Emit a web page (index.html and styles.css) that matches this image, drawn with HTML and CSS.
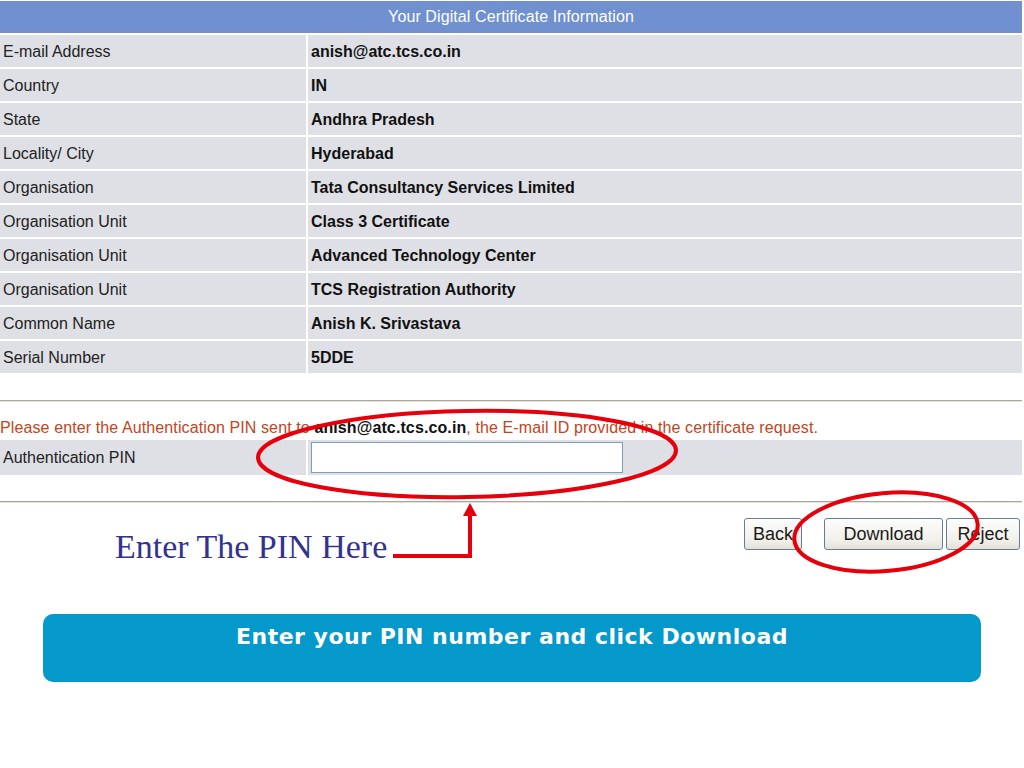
FILE: index.html
```html
<!DOCTYPE html>
<html lang="en">
<head>
<meta charset="utf-8">
<title>Your Digital Certificate Information</title>
<link rel="stylesheet" href="styles.css">
</head>
<body>
<div class="page">
  <div class="cert">
    <div class="cert-head">Your Digital Certificate Information</div>
    <div class="lbl">E-mail Address</div><div class="val">anish@atc.tcs.co.in</div>
    <div class="lbl">Country</div><div class="val">IN</div>
    <div class="lbl">State</div><div class="val">Andhra Pradesh</div>
    <div class="lbl">Locality/ City</div><div class="val">Hyderabad</div>
    <div class="lbl">Organisation</div><div class="val">Tata Consultancy Services Limited</div>
    <div class="lbl">Organisation Unit</div><div class="val">Class 3 Certificate</div>
    <div class="lbl">Organisation Unit</div><div class="val">Advanced Technology Center</div>
    <div class="lbl">Organisation Unit</div><div class="val">TCS Registration Authority</div>
    <div class="lbl">Common Name</div><div class="val">Anish K. Srivastava</div>
    <div class="lbl">Serial Number</div><div class="val">5DDE</div>
  </div>

  <div class="rule rule-first"></div>

  <p class="notice">Please enter the Authentication PIN sent to <b class="notice-mail">anish@atc.tcs.co.in</b>, the E-mail ID provided in the certificate request.</p>

  <div class="pin-row">
    <div class="lbl">Authentication PIN</div>
    <div class="val pin-cell"><input class="pin-input" type="text"></div>
  </div>

  <div class="rule rule-second"></div>

  <div class="actions">
    <div class="hint">Enter The PIN Here</div>
    <div class="buttons">
      <button class="btn btn-back">Back</button>
      <button class="btn btn-download">Download</button>
      <button class="btn btn-reject">Reject</button>
    </div>
  </div>

  <div class="banner">Enter your PIN number and click Download</div>

  <svg class="annot" width="1024" height="768" viewBox="0 0 1024 768" aria-hidden="true">
    <ellipse cx="467" cy="454" rx="209" ry="43" transform="rotate(-1 467 454)" fill="none" stroke="#e6000c" stroke-width="4"/>
    <ellipse cx="886" cy="532" rx="92" ry="39" transform="rotate(-5 886 532)" fill="none" stroke="#e6000c" stroke-width="4"/>
    <path d="M393 556 H470 V513" fill="none" stroke="#e6000c" stroke-width="4"/>
    <polygon points="470,503 463,516 477,516" fill="#e6000c"/>
  </svg>
</div>
</body>
</html>
```

FILE: styles.css
```css
html, body {
  margin: 0;
  padding: 0;
  background: #ffffff;
}

.page {
  position: relative;
  width: 1024px;
  height: 768px;
  overflow: hidden;
  font-family: "Liberation Sans", Arial, sans-serif;
  font-size: 16px;
  color: #1a1a1a;
}

.cert {
  display: grid;
  grid-template-columns: 306px 714px;
  grid-auto-rows: 32px;
  gap: 2px;
  width: 1022px;
  margin-top: 1px;
}

.cert-head {
  grid-column: 1 / -1;
  background: #7090cf;
  color: #ffffff;
  text-align: center;
  line-height: 32px;
  letter-spacing: 0.1px;
}

.lbl,
.val {
  box-sizing: border-box;
  background: #dfe0e5;
  padding-top: 1px;
  line-height: 31px;
  white-space: nowrap;
}

.lbl {
  padding-left: 3px;
  color: #222222;
}

.val {
  padding-left: 3px;
  font-weight: bold;
  color: #111111;
}

.rule {
  width: 1022px;
  height: 0;
  border-top: 1px solid #aca899;
  border-bottom: 1px solid #e4e1d8;
}

.rule-first {
  margin-top: 27px;
}

.rule-second {
  margin-top: 26px;
}

.notice {
  margin: 14px 0 0 0;
  line-height: 23px;
  color: #c0461e;
  letter-spacing: 0.11px;
  white-space: nowrap;
}

.notice-mail {
  color: #111111;
}

.pin-row {
  display: grid;
  grid-template-columns: 306px 714px;
  column-gap: 2px;
  width: 1022px;
  height: 35px;
  margin-top: 1px;
}

.pin-row .lbl,
.pin-row .val {
  padding-top: 0;
  line-height: 35px;
}

.pin-cell {
  display: flex;
  align-items: center;
}

.pin-input {
  box-sizing: border-box;
  width: 312px;
  height: 31px;
  margin: 0;
  border: 1px solid #7f9db9;
  background: #ffffff;
  padding: 0 4px;
}

.actions {
  display: flex;
  justify-content: space-between;
  align-items: flex-start;
  height: 46px;
  margin-top: 15px;
}

.hint {
  margin: 12px 0 0 115px;
  font-family: "Liberation Serif", "Times New Roman", serif;
  font-size: 34px;
  line-height: 1;
  color: #33338f;
  white-space: nowrap;
}

.buttons {
  display: flex;
  padding-right: 4px;
}

.btn {
  box-sizing: border-box;
  height: 32px;
  padding: 0;
  border: 1px solid #687c98;
  border-radius: 3px;
  background: linear-gradient(#fdfdfc, #f1f0ea 70%, #e3e1d8);
  font-family: "Liberation Sans", Arial, sans-serif;
  font-size: 18px;
  color: #1a1a1a;
}

.btn-back {
  width: 58px;
}

.btn-download {
  width: 119px;
  margin-left: 22px;
}

.btn-reject {
  width: 74px;
  margin-left: 3px;
}

.banner {
  box-sizing: border-box;
  width: 938px;
  height: 68px;
  margin: 50px 0 0 43px;
  padding-top: 11px;
  border-radius: 10px;
  background: #0498cb;
  color: #ffffff;
  text-align: center;
  font-family: "DejaVu Sans", Verdana, sans-serif;
  font-weight: bold;
  font-size: 22px;
  letter-spacing: 0.5px;
  line-height: 24px;
}

.annot {
  position: absolute;
  left: 0;
  top: 0;
  pointer-events: none;
}
```
